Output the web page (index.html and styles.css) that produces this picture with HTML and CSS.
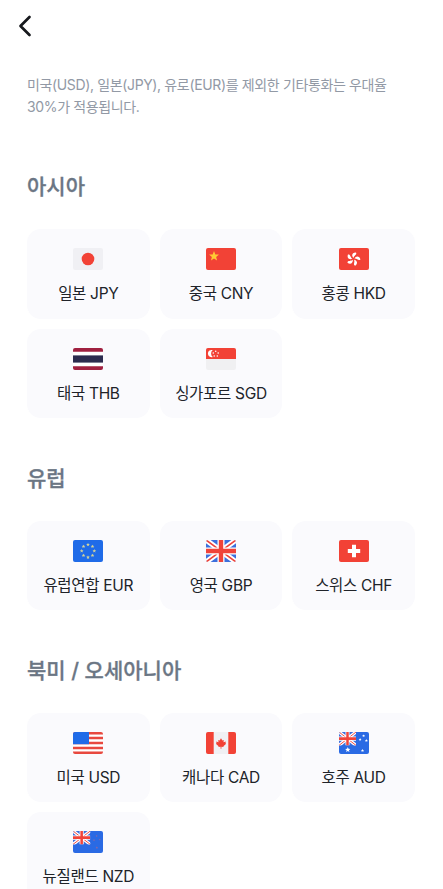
FILE: index.html
```html
<!DOCTYPE html>
<html lang="ko">
<head>
    <meta charset="UTF-8">
    <meta name="viewport" content="width=device-width, initial-scale=1.0">
    <link rel="stylesheet" href="styles.css">
    <title>환전</title>
</head>
<body>
    <!-- shared shapes -->
    <svg class="defs" aria-hidden="true">
        <symbol id="star" viewBox="-10 -10 20 20">
            <polygon points="0,-10 2.6,-3.4 9.5,-3.1 4.1,1.3 5.9,8.1 0,4.3 -5.9,8.1 -4.1,1.3 -9.5,-3.1 -2.6,-3.4" />
        </symbol>
        <symbol id="union" viewBox="0 0 30 22" preserveAspectRatio="none">
            <rect width="30" height="22" fill="#3d6fdc" />
            <path d="M0 0L30 22M30 0L0 22" stroke="#fff" stroke-width="5.4" />
            <path d="M0 0L30 22M30 0L0 22" stroke="#f0433a" stroke-width="1.6" />
            <path d="M15 0V22M0 11H30" stroke="#fff" stroke-width="7" />
            <path d="M15 0V22M0 11H30" stroke="#f0433a" stroke-width="4.4" />
        </symbol>
    </svg>

    <header class="top-bar">
        <button class="back-btn" aria-label="뒤로">
            <svg width="14" height="22" viewBox="0 0 14 22"><path d="M11.5 2L2.5 11L11.5 20" /></svg>
        </button>
    </header>

    <main>
        <p class="notice">미국(USD), 일본(JPY), 유로(EUR)를 제외한 기타통화는 우대율<br>30%가 적용됩니다.</p>

        <section>
            <h2>아시아</h2>
            <div class="currency-list">
                <button class="currency">
                    <svg class="flag" viewBox="0 0 30 22">
                        <rect width="30" height="22" fill="#f0f0f4" />
                        <circle cx="15" cy="11" r="6.3" fill="#f24236" />
                    </svg>
                    <span>일본 JPY</span>
                </button>
                <button class="currency">
                    <svg class="flag" viewBox="0 0 30 22">
                        <rect width="30" height="22" fill="#f24236" />
                        <use href="#star" x="2.8" y="3" width="10.4" height="10.4" fill="#ffc933" />
                    </svg>
                    <span>중국 CNY</span>
                </button>
                <button class="currency">
                    <svg class="flag" viewBox="0 0 30 22">
                        <rect width="30" height="22" fill="#f24236" />
                        <g transform="translate(14.4 11)" fill="#fff">
                            <path id="petal" d="M-.3 -1C-3.2 -2.8 -2.8 -6.2 .8 -7C2.7 -5 -.5 -3.8 -.3 -1Z" transform="rotate(15)" />
                            <use href="#petal" transform="rotate(72)" />
                            <use href="#petal" transform="rotate(144)" />
                            <use href="#petal" transform="rotate(216)" />
                            <use href="#petal" transform="rotate(288)" />
                        </g>
                    </svg>
                    <span>홍콩 HKD</span>
                </button>
                <button class="currency">
                    <svg class="flag" viewBox="0 0 30 22">
                        <rect width="30" height="22" fill="#fff" />
                        <path d="M0 0H30V3.8H0ZM0 18.2H30V22H0Z" fill="#a02040" />
                        <rect y="7.4" width="30" height="7.2" fill="#2b2b4e" />
                    </svg>
                    <span>태국 THB</span>
                </button>
                <button class="currency">
                    <svg class="flag" viewBox="0 0 30 22">
                        <rect width="30" height="22" fill="#f0f0f2" />
                        <rect width="30" height="11" fill="#f24236" />
                        <path d="M6.8 2.1A3.7 3.7 0 1 0 6.8 9.1A4.4 4.4 0 0 1 6.8 2.1Z" fill="#fff" />
                        <g fill="#fff">
                            <circle cx="9.7" cy="3.3" r=".8" />
                            <circle cx="12.2" cy="5" r=".8" />
                            <circle cx="11.3" cy="8" r=".8" />
                            <circle cx="8.2" cy="8" r=".8" />
                            <circle cx="7.3" cy="5" r=".8" />
                        </g>
                    </svg>
                    <span>싱가포르 SGD</span>
                </button>
            </div>
        </section>

        <section>
            <h2>유럽</h2>
            <div class="currency-list">
                <button class="currency">
                    <svg class="flag" viewBox="0 0 30 22">
                        <rect width="30" height="22" fill="#1f6be8" />
                        <g fill="#d3d49a">
                            <use href="#star" x="13" y="2.7" width="4" height="4" />
                            <use href="#star" x="17.5" y="4.5" width="4" height="4" />
                            <use href="#star" x="19.3" y="9" width="4" height="4" />
                            <use href="#star" x="17.5" y="13.5" width="4" height="4" />
                            <use href="#star" x="13" y="15.3" width="4" height="4" />
                            <use href="#star" x="8.5" y="13.5" width="4" height="4" />
                            <use href="#star" x="6.7" y="9" width="4" height="4" />
                            <use href="#star" x="8.5" y="4.5" width="4" height="4" />
                        </g>
                    </svg>
                    <span>유럽연합 EUR</span>
                </button>
                <button class="currency">
                    <svg class="flag" viewBox="0 0 30 22">
                        <use href="#union" width="30" height="22" />
                    </svg>
                    <span>영국 GBP</span>
                </button>
                <button class="currency">
                    <svg class="flag" viewBox="0 0 30 22">
                        <rect width="30" height="22" fill="#f24236" />
                        <path d="M15 4.8V17.2M8.8 11H21.2" stroke="#fff" stroke-width="4" />
                    </svg>
                    <span>스위스 CHF</span>
                </button>
            </div>
        </section>

        <section>
            <h2>북미 / 오세아니아</h2>
            <div class="currency-list">
                <button class="currency">
                    <svg class="flag" viewBox="0 0 30 22">
                        <rect width="30" height="22" fill="#fff" />
                        <path d="M0 1.2H30M0 6.1H30M0 11H30M0 15.9H30M0 20.8H30" stroke="#e8483f" stroke-width="2.5" />
                        <rect width="16" height="12.2" fill="#1f6be8" />
                    </svg>
                    <span>미국 USD</span>
                </button>
                <button class="currency">
                    <svg class="flag" viewBox="0 0 30 22">
                        <rect width="30" height="22" fill="#f0f0f4" />
                        <path d="M0 0H7.7V22H0ZM22.3 0H30V22H22.3Z" fill="#f24236" />
                        <path d="M15 6.2L16.4 8.5L17.8 7.9L17.5 10.3L19.8 9.6L19.5 11.2L20.2 11.8L17.4 14.2L17.6 15L15.4 14.8V16.8H14.6V14.8L12.4 15L12.6 14.2L9.8 11.8L10.5 11.2L10.2 9.6L12.5 10.3L12.2 7.9L13.6 8.5Z" fill="#f24236" />
                    </svg>
                    <span>캐나다 CAD</span>
                </button>
                <button class="currency">
                    <svg class="flag" viewBox="0 0 30 22">
                        <rect width="30" height="22" fill="#2a6ae4" />
                        <use href="#union" width="17" height="13.4" />
                        <g fill="#fff">
                            <use href="#star" x="6" y="15" width="5.6" height="5.6" />
                            <use href="#star" x="23" y="2.2" width="3.2" height="3.2" />
                            <use href="#star" x="19.5" y="5.9" width="3.2" height="3.2" />
                            <use href="#star" x="25.8" y="7" width="3.2" height="3.2" />
                            <use href="#star" x="21.8" y="16.8" width="3.4" height="3.4" />
                        </g>
                    </svg>
                    <span>호주 AUD</span>
                </button>
                <button class="currency">
                    <svg class="flag" viewBox="0 0 30 22">
                        <rect width="30" height="22" fill="#2a6ae4" />
                        <use href="#union" width="17.3" height="13.4" />
                        <g fill="#8668a8">
                            <use href="#star" x="22.4" y="3.8" width="2.4" height="2.4" />
                            <use href="#star" x="19.8" y="8" width="2.4" height="2.4" />
                            <use href="#star" x="25.6" y="7.4" width="2.4" height="2.4" />
                            <use href="#star" x="22.4" y="15.2" width="2.8" height="2.8" />
                        </g>
                    </svg>
                    <span>뉴질랜드 NZD</span>
                </button>
            </div>
        </section>
    </main>
</body>
</html>
```
FILE: styles.css
```css
* {
    box-sizing: border-box;
}

html {
    height: 100%;
    overflow: hidden;
}

body {
    margin: 0;
    background-color: #fff;
    font-family: Inter, "Noto Sans CJK KR", sans-serif;
}

.defs {
    display: none;
}

.top-bar {
    height: 52px;
    padding: 15px 18px;
}

.back-btn {
    display: block;
    padding: 0;
    border: none;
    background: none;
    cursor: pointer;
}

.back-btn svg {
    display: block;
    fill: none;
    stroke: #17191d;
    stroke-width: 2.7;
    stroke-linecap: round;
    stroke-linejoin: round;
}

main {
    padding: 22px 28px 0 27px;
}

.notice {
    margin: 0;
    font-size: 14px;
    line-height: 21.5px;
    letter-spacing: -0.36px;
    white-space: nowrap;
    color: #9299a5;
}

h2 {
    margin: 0;
    font-size: 21px;
    font-weight: 500;
    line-height: 30px;
    color: #6b7684;
    -webkit-text-stroke: 0.3px #6b7684;
}

section {
    padding-top: 55px;
}

section + section {
    padding-top: 45.5px;
}

.currency-list {
    display: grid;
    grid-template-columns: repeat(3, 1fr);
    grid-auto-rows: 89.5px;
    gap: 10px;
    margin-top: 27px;
}

.currency {
    display: flex;
    flex-direction: column;
    align-items: center;
    gap: 13px;
    padding: 19px 0 0;
    border: none;
    border-radius: 14px;
    background-color: #fafafd;
    font-family: inherit;
    font-size: 15.5px;
    line-height: 22px;
    letter-spacing: -0.3px;
    color: #202329;
    white-space: nowrap;
    cursor: pointer;
}

.flag {
    width: 30px;
    height: 22px;
    border-radius: 2px;
    overflow: hidden;
}
```
